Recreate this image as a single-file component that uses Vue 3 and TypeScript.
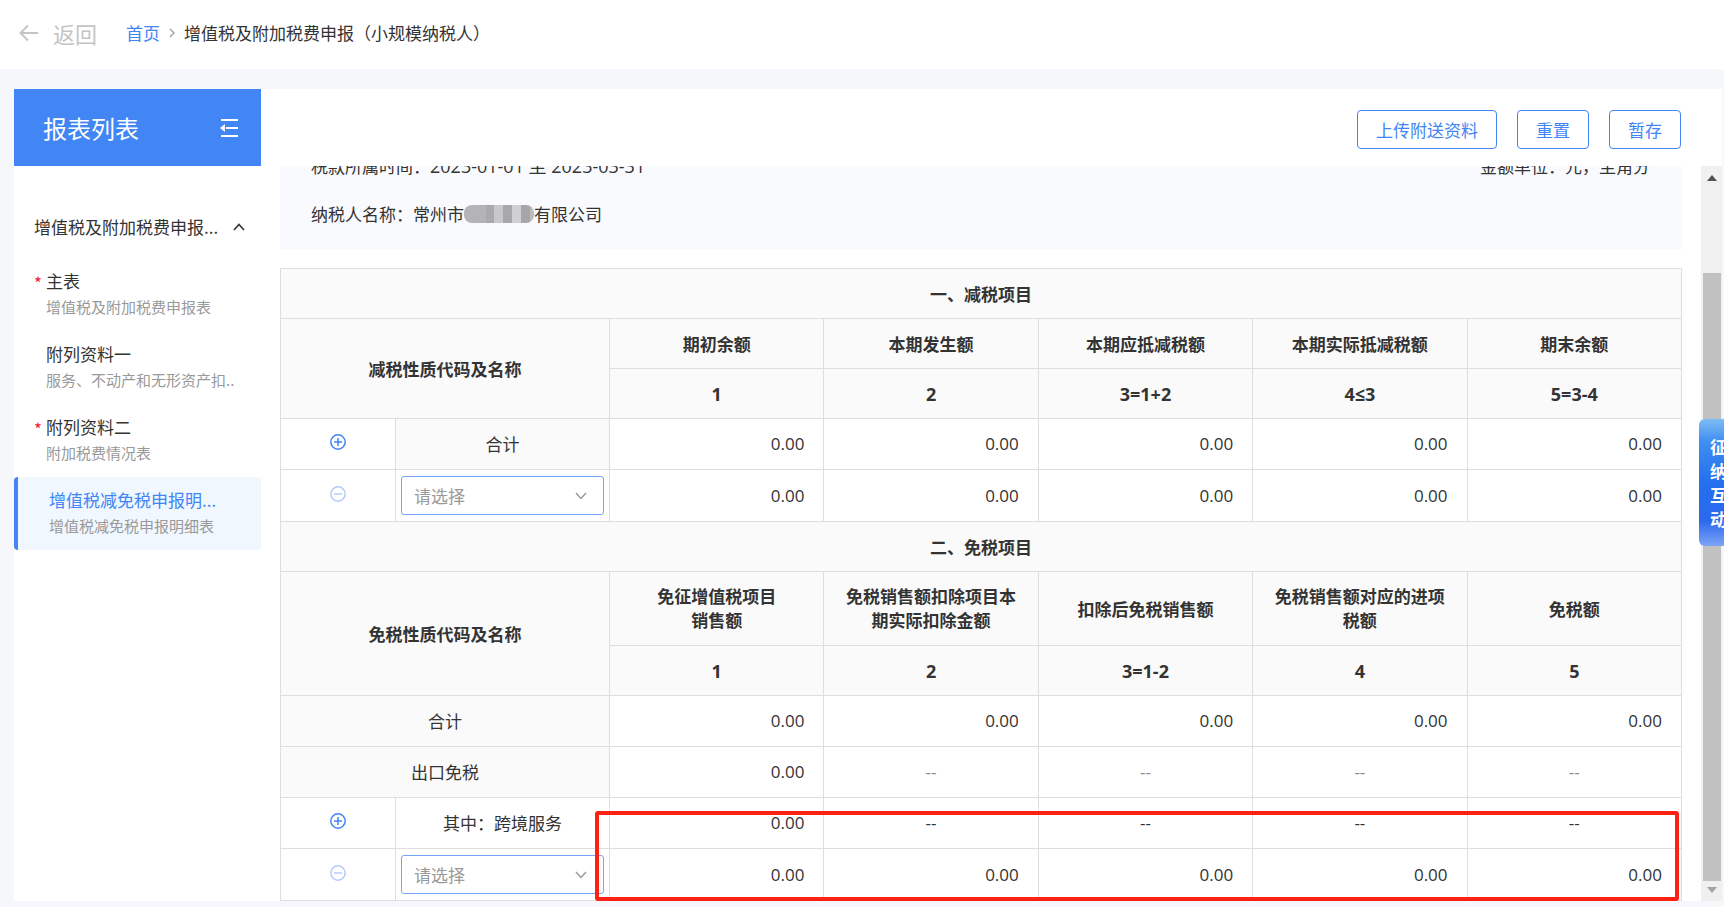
<script setup lang="ts">
import { ref } from 'vue'

interface Report {
  title: string
  desc: string
  required?: boolean
  active?: boolean
}

interface DataRow {
  kind: 'total' | 'wide' | 'add' | 'pick'
  label: string
  values: string[]
  muted?: boolean
}

interface Section {
  title: string
  codeLabel: string
  heads: string[][]
  formulas: string[]
  rows: DataRow[]
}

const reports: Report[] = [
  { title: '主表', desc: '增值税及附加税费申报表', required: true },
  { title: '附列资料一', desc: '服务、不动产和无形资产扣..' },
  { title: '附列资料二', desc: '附加税费情况表', required: true },
  { title: '增值税减免税申报明...', desc: '增值税减免税申报明细表', active: true },
]

const actions: string[] = ['上传附送资料', '重置', '暂存']

const zeros = (): string[] => Array(5).fill('0.00')
const firstOnly = (): string[] => ['0.00', '--', '--', '--', '--']

const sections: Section[] = [
  {
    title: '一、减税项目',
    codeLabel: '减税性质代码及名称',
    heads: [['期初余额'], ['本期发生额'], ['本期应抵减税额'], ['本期实际抵减税额'], ['期末余额']],
    formulas: ['1', '2', '3=1+2', '4≤3', '5=3-4'],
    rows: [
      { kind: 'total', label: '合计', values: zeros() },
      { kind: 'pick', label: '减税性质代码', values: zeros() },
    ],
  },
  {
    title: '二、免税项目',
    codeLabel: '免税性质代码及名称',
    heads: [
      ['免征增值税项目', '销售额'],
      ['免税销售额扣除项目本', '期实际扣除金额'],
      ['扣除后免税销售额'],
      ['免税销售额对应的进项', '税额'],
      ['免税额'],
    ],
    formulas: ['1', '2', '3=1-2', '4', '5'],
    rows: [
      { kind: 'wide', label: '合计', values: zeros() },
      { kind: 'wide', label: '出口免税', values: firstOnly(), muted: true },
      { kind: 'add', label: '其中：跨境服务', values: firstOnly() },
      { kind: 'pick', label: '免税性质代码', values: zeros() },
    ],
  },
]

const picked = ref<string[]>(['', ''])
</script>

<template>
  <div class="page">
    <header class="topbar">
      <button class="back" type="button">
        <svg width="20" height="18" viewBox="0 0 20 18" fill="none" stroke="currentColor" stroke-width="2">
          <path d="M19 9H2M9 1.500L1.500 9L9 16.500" />
        </svg>
        <span>返回</span>
      </button>
      <nav class="crumbs" aria-label="位置">
        <a href="#">首页</a>
        <svg width="6" height="10" viewBox="0 0 6 10" fill="none" stroke="#999" stroke-width="1.2">
          <path d="M1 1L5 5L1 9" />
        </svg>
        <span>增值税及附加税费申报（小规模纳税人）</span>
      </nav>
    </header>

    <div class="card">
      <aside class="sidebar">
        <div class="side-head">
          <h2>报表列表</h2>
          <button type="button" aria-label="收起">
            <svg width="18" height="18" viewBox="0 0 18 18" fill="#fff">
              <path d="M1 0h17v2H1zM6 8h12v2H6zM1 16h17v2H1zM0 9l5-4v8z" />
            </svg>
          </button>
        </div>
        <button class="group" type="button">
          <span>增值税及附加税费申报...</span>
          <svg width="12" height="8" viewBox="0 0 12 8" fill="none" stroke="#333" stroke-width="1.600">
            <path d="M1 7L6 1.500L11 7" />
          </svg>
        </button>
        <ul class="reports">
          <li v-for="r in reports" :key="r.title">
            <a href="#" :class="{ active: r.active }">
              <span class="mark">{{ r.required ? '*' : '' }}</span>
              <span class="names">
                <span class="name">{{ r.title }}</span>
                <span class="desc">{{ r.desc }}</span>
              </span>
            </a>
          </li>
        </ul>
      </aside>

      <main class="main">
        <div class="toolbar">
          <button v-for="a in actions" :key="a" type="button">{{ a }}</button>
        </div>
        <div class="body">
          <div class="viewport">
            <div class="info">
              <div class="line">
                <span>税款所属时间：<span class="num">2023-01-01 至 2023-03-31</span></span>
                <span>金额单位：元，至角分</span>
              </div>
              <div class="line">
                <span class="payer">纳税人名称：常州市<i class="mosaic"></i>有限公司</span>
              </div>
            </div>
            <div class="sheet">
              <table>
                <colgroup>
                  <col class="c-icon" />
                  <col class="c-code" />
                  <col v-for="n in 5" :key="n" />
                </colgroup>
                <tbody v-for="(s, si) in sections" :key="s.title">
                  <tr class="head">
                    <th colspan="7">{{ s.title }}</th>
                  </tr>
                  <tr class="head">
                    <th colspan="2" rowspan="2">{{ s.codeLabel }}</th>
                    <th v-for="h in s.heads" :key="h[0]">
                      <span v-for="part in h" :key="part" class="part">{{ part }}</span>
                    </th>
                  </tr>
                  <tr class="head">
                    <th v-for="f in s.formulas" :key="f" class="num">{{ f }}</th>
                  </tr>
                  <tr v-for="row in s.rows" :key="row.label" class="data">
                    <td v-if="row.kind === 'wide'" colspan="2" class="label grey">{{ row.label }}</td>
                    <template v-else>
                      <td class="icon">
                        <button type="button" :class="{ dim: row.kind === 'pick' }" :aria-label="row.kind === 'pick' ? '删除' : '增加'">
                          <svg width="18" height="18" viewBox="0 0 18 18" fill="none" stroke="currentColor" stroke-width="1.500">
                            <circle cx="9" cy="9" r="7.200" />
                            <path v-if="row.kind === 'pick'" d="M5 9H13" />
                            <path v-else d="M5 9H13M9 5V13" />
                          </svg>
                        </button>
                      </td>
                      <td v-if="row.kind === 'pick'" class="pick">
                        <div class="select">
                          <select v-model="picked[si]" :aria-label="row.label">
                            <option value="">请选择</option>
                          </select>
                          <svg width="12" height="8" viewBox="0 0 12 8" fill="none" stroke="#999" stroke-width="1.400">
                            <path d="M1 1L6 6.500L11 1" />
                          </svg>
                        </div>
                      </td>
                      <td v-else class="label" :class="{ grey: row.kind === 'total' }">{{ row.label }}</td>
                    </template>
                    <td
                      v-for="(v, i) in row.values"
                      :key="i"
                      class="num"
                      :class="{ none: v === '--', muted: row.muted && v === '--' }"
                    >{{ v }}</td>
                  </tr>
                </tbody>
              </table>
              <div class="marker"></div>
            </div>
          </div>
          <div class="scrollbar" aria-hidden="true">
            <svg width="10" height="6" viewBox="0 0 10 6"><path d="M0 6L5 0L10 6z" fill="#505050" /></svg>
            <div class="track"><div class="thumb"></div></div>
            <svg width="10" height="6" viewBox="0 0 10 6"><path d="M0 0H10L5 6z" fill="#a3a3a3" /></svg>
          </div>
        </div>
      </main>
    </div>

    <button class="assist" type="button"><span>征纳互动</span></button>
  </div>
</template>

<style>
body {
  margin: 0;
  background: #f5f7fa;
}
</style>

<style scoped>
.page {
  position: relative;
  display: flex;
  flex-direction: column;
  height: 100vh;
  overflow: hidden;
  box-sizing: border-box;
  color: #333;
  font-family: "Noto Sans CJK SC", sans-serif;
  font-size: 17px;
  line-height: 24px;
}
button {
  font: inherit;
  color: inherit;
  background: none;
  border: 0;
  padding: 0;
}
a {
  text-decoration: none;
}
svg {
  display: block;
  flex: none;
}
.num {
  font-family: "Open Sans", "Noto Sans CJK SC", sans-serif;
  font-size: 18px;
}

.topbar {
  display: flex;
  align-items: center;
  flex: none;
  height: 69px;
  padding: 0 0 3px 19px;
  box-sizing: border-box;
  gap: 29px;
  background: #fff;
}
.back {
  display: flex;
  align-items: center;
  gap: 14px;
  font-size: 22px;
  color: #c4c4c4;
}
.crumbs {
  display: flex;
  align-items: center;
  gap: 9px;
}
.crumbs a {
  color: #4285f5;
}

.card {
  display: flex;
  flex: 1;
  min-height: 0;
  margin: 20px 2px 6px 14px;
  background: #fff;
}
.sidebar {
  flex: none;
  width: 247px;
}
.side-head {
  display: flex;
  align-items: center;
  justify-content: space-between;
  height: 77px;
  padding: 1px 23px 0 29px;
  box-sizing: border-box;
  background: #4285f5;
  color: #fff;
}
.side-head h2 {
  margin: 0;
  font-size: 24px;
  font-weight: 400;
  line-height: 32px;
}
.group {
  display: flex;
  align-items: center;
  justify-content: space-between;
  width: 100%;
  padding: 49px 16px 19px 20px;
}
.reports {
  list-style: none;
  margin: 0;
  padding: 0;
}
.reports a {
  display: flex;
  height: 73px;
  padding: 10px 0 0 20px;
  box-sizing: border-box;
  line-height: 26px;
  color: #333;
}
.reports a.active {
  padding-left: 19px;
  border-left: 4px solid #4285f5;
  border-radius: 4px;
  background: #f0f7ff;
}
.mark {
  width: 12px;
  line-height: 30px;
  color: #f5222d;
}
.names {
  display: flex;
  flex-direction: column;
}
.active .name {
  color: #4285f5;
}
.desc {
  font-size: 15px;
  color: #999;
}

.main {
  display: flex;
  flex-direction: column;
  flex: 1;
  min-width: 0;
}
.toolbar {
  display: flex;
  align-items: center;
  justify-content: flex-end;
  gap: 20px;
  flex: none;
  height: 77px;
  padding: 4px 41px 0 0;
  box-sizing: border-box;
}
.toolbar button {
  height: 39px;
  padding: 0 18px;
  border: 1px solid #4285f5;
  border-radius: 4px;
  color: #4285f5;
}
.body {
  display: flex;
  flex: 1;
  min-height: 0;
}
.viewport {
  display: flex;
  flex-direction: column;
  justify-content: flex-end;
  flex: 1;
  min-width: 0;
  overflow: hidden;
  padding: 0 19px;
}
.info {
  flex: none;
  padding: 24px 32px 11px 31px;
  margin-bottom: 19px;
  background: #f9fafe;
}
.line {
  display: flex;
  justify-content: space-between;
  height: 48px;
  align-items: center;
}
.payer {
  display: flex;
  align-items: center;
}
.mosaic {
  width: 70px;
  height: 18px;
  border-radius: 8px;
  background: linear-gradient(90deg, #b4b4b6 0 22px, #aaaaac 22px 30px, #c8c8ca 30px 39px, #a8a8aa 39px 48px, #d0d0d2 48px 57px, #a6a6a8 57px 66px, #bcbcbe 66px);
}

.sheet {
  position: relative;
  flex: none;
}
table {
  width: 100%;
  table-layout: fixed;
  border-collapse: collapse;
}
.c-icon {
  width: 115px;
}
.c-code {
  width: 214px;
}
th,
td {
  padding: 0;
  border: 1px solid #dedede;
  text-align: center;
}
th {
  height: 49px;
  background: #fafafa;
  font-weight: 700;
}
th .part {
  display: block;
}
th .part:first-child:not(:last-child) {
  padding-top: 12px;
}
th .part:last-child:not(:first-child) {
  padding-bottom: 13px;
}
td {
  height: 50px;
}
td.num {
  padding-right: 19px;
  font-size: 17px;
  text-align: right;
}
td.none {
  padding: 0;
  text-align: center;
}
td.muted {
  color: #888;
}
td.grey {
  background: #fafafa;
}
.icon button {
  display: block;
  margin: 0 auto;
  padding-bottom: 4px;
  color: #4285f5;
}
.icon .dim {
  color: #b4c9fb;
}
td.pick {
  height: 39px;
  padding: 6px 5px;
}
.select {
  position: relative;
}
.select select {
  display: block;
  appearance: none;
  width: 100%;
  height: 39px;
  padding: 0 12px;
  border: 1px solid #76a5f8;
  border-radius: 3px;
  background: #fff;
  color: #999;
  font: inherit;
}
.select svg {
  position: absolute;
  right: 17px;
  top: 16px;
}
.marker {
  position: absolute;
  left: 315px;
  right: 3px;
  bottom: 0;
  height: 90px;
  box-sizing: border-box;
  border: 4px solid #fe2012;
  border-radius: 3px;
  pointer-events: none;
}

.scrollbar {
  display: flex;
  flex-direction: column;
  align-items: center;
  flex: none;
  width: 21px;
  padding: 9px 0 8px;
  box-sizing: border-box;
  background: #f0f0f0;
}
.track {
  display: flex;
  flex-direction: column;
  justify-content: flex-end;
  flex: 1;
  width: 18px;
  padding: 5px 0 6px;
}
.thumb {
  height: 87.5%;
  background: #c1c1c1;
}

.assist {
  position: absolute;
  right: 0;
  top: 419px;
  width: 25px;
  height: 127px;
  padding-left: 11px;
  overflow: hidden;
  border-radius: 6px 0 0 6px;
  background: linear-gradient(180deg, #7dbcf3 0%, #3f8df2 18%, #2470ee 50%, #2c68ee 80%, #7da4f5 100%);
  color: #fff;
  font-weight: 700;
  text-align: left;
}
.assist span {
  display: block;
  width: 17px;
  word-break: break-all;
}
</style>
